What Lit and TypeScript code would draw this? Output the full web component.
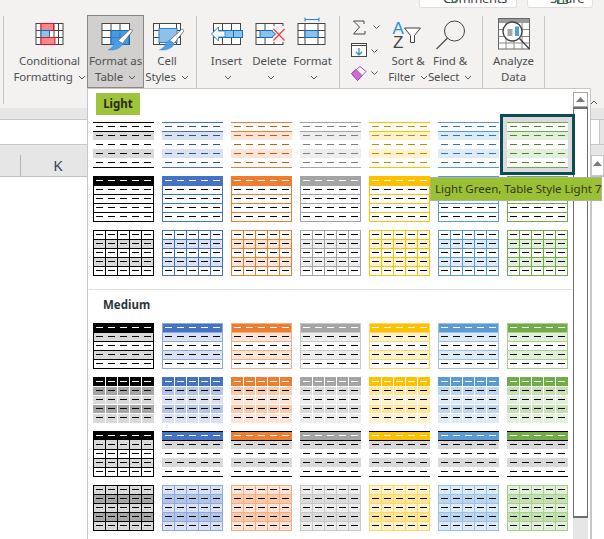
import { LitElement, html, css, svg } from "lit";
import { customElement } from "lit/decorators.js";

const C = ["#000000", "#4472c4", "#ed7d31", "#a5a5a5", "#ffc000", "#5b9bd5", "#70ad47"];
const T80 = ["#d9d9d9", "#d9e1f2", "#fce4d6", "#ededed", "#fff2cc", "#ddebf7", "#e2efda"];
const T60 = ["#a6a6a6", "#b4c6e7", "#f8cbad", "#dbdbdb", "#ffe699", "#bdd7ee", "#c6e0b4"];
const T40 = ["#000000", "#8eaadb", "#f4b083", "#c9c9c9", "#ffd966", "#9cc2e5", "#a8d08d"];
const DK = ["#000000", "#2f5597", "#c55a11", "#7f7f7f", "#bf8f00", "#2e75b6", "#548235"];
const ROWS = [0, 1, 2, 3, 4];

const r = (x: number, y: number, w: number, h: number, f: string) =>
  svg`<rect x=${x} y=${y} width=${w} height=${h} fill=${f}></rect>`;
const dashRow = (row: number, color: string) =>
  ROWS.map((c) => r(3 + 12 * c, 9 * row + 4, 7, 1, color));
const hLines = (ys: number[], color: string) => ys.map((y) => r(0, y, 61, 1, color));
const vLines = (xs: number[], color: string) => xs.map((x) => r(x, 0, 1, 46, color));
const band = (row: number, color: string) => r(0, 9 * row, 61, 9, color);

function shapes(kind: string, c: number) {
  const col = C[c];
  switch (kind) {
    case "l1":
      return [band(1, T80[c]), band(3, T80[c]), hLines([0, 9, 45], col), ROWS.map((i) => dashRow(i, DK[c]))];
    case "l2":
      return [
        r(0, 0, 61, 10, col),
        hLines([18, 27, 36, 45], col),
        vLines([0, 60], col),
        dashRow(0, "#fff"),
        [1, 2, 3, 4].map((i) => dashRow(i, "#000")),
      ];
    case "l3":
      return [
        band(1, T80[c]),
        band(3, T80[c]),
        hLines([0, 9, 18, 27, 36, 45], col),
        vLines([0, 12, 24, 36, 48, 60], col),
        ROWS.map((i) => dashRow(i, "#000")),
      ];
    case "m1":
      return [
        r(0, 0, 61, 10, col),
        band(1, T80[c]),
        band(3, T80[c]),
        hLines([0, 9, 18, 27, 36, 45], T40[c]),
        vLines([0, 60], T40[c]),
        dashRow(0, "#fff"),
        [1, 2, 3, 4].map((i) => dashRow(i, "#000")),
      ];
    case "m2":
      return [
        band(0, col),
        band(1, T60[c]),
        band(2, T80[c]),
        band(3, T60[c]),
        band(4, T80[c]),
        r(0, 45, 61, 1, T80[c]),
        hLines([9, 18, 27, 36], "#fff"),
        vLines([12, 24, 36, 48], "#fff"),
        dashRow(0, "#fff"),
        [1, 2, 3, 4].map((i) => dashRow(i, "#000")),
      ];
    case "m3":
      if (c === 0)
        return [
          r(0, 0, 61, 10, "#000"),
          band(1, T80[0]),
          band(3, T80[0]),
          hLines([18, 27, 36, 45], "#000"),
          vLines([0, 12, 24, 36, 48, 60], "#000"),
          dashRow(0, "#fff"),
          [1, 2, 3, 4].map((i) => dashRow(i, "#000")),
        ];
      return [
        band(0, col),
        band(1, "#d9d9d9"),
        band(3, "#d9d9d9"),
        hLines([0, 9, 45], "#000"),
        dashRow(0, "#fff"),
        [1, 2, 3, 4].map((i) => dashRow(i, "#000")),
      ];
    default:
      return [
        band(0, T80[c]),
        band(1, T60[c]),
        band(2, T80[c]),
        band(3, T60[c]),
        band(4, T80[c]),
        hLines([0, 9, 18, 27, 36, 45], T40[c]),
        vLines([0, 12, 24, 36, 48, 60], T40[c]),
        ROWS.map((i) => dashRow(i, "#000")),
      ];
  }
}

const thumb = (kind: string, c: number, selected = false) => html`
  <div class="thumb ${selected ? "sel" : ""}">
    <svg class="tsvg" width="61" height="46" viewBox="0 0 61 46" shape-rendering="crispEdges">
      ${r(0, 0, 61, 46, "#fff")}${shapes(kind, c)}
    </svg>
  </div>
`;

const GRID = "#444444";
const BLUE = "#8ec1ea";
const DBLUE = "#1170c2";

/* grid drawn in screenshot coordinates */
const gridLines = (x0: number, x1: number, xs: number[]) => svg`
  <rect x=${x0} y="23.5" width=${x1 - x0} height="21" fill="#fff" stroke=${GRID}></rect>
  <path d="M${x0} 30.5H${x1}M${x0} 37.5H${x1}" stroke=${GRID}></path>
  ${xs.map((x) => svg`<path d="M${x} 23.5V44.5" stroke=${GRID}></path>`)}
`;
const brush = (dx: number) => svg`
  <g transform="translate(${dx} 0)">
    <path d="M129.500 29.500 C131 29 132 30 131.500 31.500 L122 43.500 L117.500 40.500 Z" fill="#fff" stroke="#6b6b6b" stroke-width=".9"></path>
    <path d="M117.500 40.500 L122 43.800 C120.500 48.500 114 51 107.500 49.800 C110.500 48.500 112.500 47 113.500 44 C114 42 115.500 40.800 117.500 40.500 Z" fill="#4f9fe0" stroke="#3c8ed6" stroke-width=".5"></path>
  </g>
`;

const icons: Record<string, unknown> = {
  cond: svg`
    ${gridLines(35.5, 62.5, [40.5, 53.5, 58])}
    <rect x="40.5" y="23.5" width="12.5" height="7" fill="#f4868c" stroke="#e8112d"></rect>
    <rect x="40.5" y="30.5" width="8.5" height="7" fill=${BLUE} stroke=${DBLUE}></rect>
    <rect x="40.5" y="37.5" width="14" height="7" fill="#f4868c" stroke="#e8112d"></rect>
  `,
  fat: svg`
    ${gridLines(101.5, 129, [110.5, 119.5])}
    <rect x="110.5" y="30.5" width="18" height="14" fill="#4a98dd" stroke=${DBLUE}></rect>
    <path d="M110.5 37.5H129M119.5 30.5V44.5" stroke="#2a80cc"></path>
    ${brush(0)}
  `,
  cell: svg`
    ${gridLines(153.5, 180.5, [159.5, 176.5])}
    <rect x="159" y="28.5" width="18" height="14" fill=${BLUE} stroke="#2a80cc"></rect>
    ${brush(52)}
  `,
  ins: svg`
    ${gridLines(213.5, 240.5, [222.5, 231.5])}
    <rect x="224" y="30.5" width="18.5" height="7" fill=${BLUE} stroke=${DBLUE}></rect>
    <path d="M233.5 30.5V37.5" stroke=${DBLUE}></path>
    <path d="M211.5 34 L218.5 27 V31 H225 V37 H218.5 V41 Z" fill="#fff" stroke="#2f8fdc"></path>
  `,
  del: svg`
    ${gridLines(255.5, 282.5, [264.5, 273.5])}
    <rect x="272" y="26" width="12.5" height="16" fill="#f3f2f1"></rect>
    <path d="M259.5 30.5H271L275 34L271 37.5H259.5Z" fill=${BLUE} stroke=${DBLUE}></path>
    <path d="M273 29L284 40.5M284 29L273 40.5" stroke="#ee3d4a" stroke-width="1.2" fill="none"></path>
  `,
  fmt: svg`
    ${gridLines(297.5, 324.5, [304.5, 317.5])}
    <rect x="304.5" y="30.5" width="13" height="7" fill=${BLUE} stroke=${DBLUE}></rect>
    <path d="M304.5 17.5V21.5M318.5 17.5V21.5M304.5 19.5H318.5" stroke="#1b87d6" fill="none"></path>
  `,
  sort: svg`
    <text x="393.5" y="33.5" font-family="Liberation Sans, sans-serif" font-size="17" fill="#2f8fdc">A</text>
    <text x="394" y="47.5" font-family="Liberation Sans, sans-serif" font-size="17" fill=${GRID}>Z</text>
    <path d="M405.5 28H421.5L415.5 35.5V42.5H411.5V35.5Z" fill="#fff" stroke=${GRID}></path>
  `,
  find: svg`
    <circle cx="455.5" cy="31" r="10" fill="none" stroke=${GRID}></circle>
    <path d="M448.5 38L437.5 49" stroke=${GRID} stroke-width="1.1"></path>
  `,
  an: svg`
    <rect x="499.5" y="18.5" width="31" height="30.5" fill="#fff" stroke="#666"></rect>
    <rect x="500" y="19" width="30" height="4" fill="#9a9a9a"></rect>
    <path d="M500 29.5H530M500 36.5H530M500 43H530M507 23V49M515 23V49M523 23V49" stroke="#8a8a8a"></path>
    <circle cx="513.5" cy="31.5" r="9.5" fill="#fff" stroke="#444" stroke-width="1.4"></circle>
    <rect x="508.5" y="29" width="5" height="7" fill="#a6a6a6"></rect>
    <rect x="516" y="26.5" width="4" height="9.5" fill="#4b9ee0"></rect>
    <path d="M520.5 38.5L530.5 49" stroke="#444" stroke-width="1.4"></path>
  `,
};

const chev = html`<svg class="chev" width="8" height="5" viewBox="0 0 8 5">
  <path d="M1 1L4 4L7 1" fill="none" stroke="#555" stroke-width="1"></path>
</svg>`;

const tool = (id: string, cx: number, width: number, l1: string, l2: string, hasChev = true, hover = false) => html`
  <div class="tool ${hover ? "hover" : ""}" style="width:${width}px">
    <svg class="ico" width="40" height="36" viewBox="${cx - 20} 16 40 36">${icons[id]}</svg>
    <div class="lbl">${l1}</div>
    <div class="lbl">${l2}${l2 ? " " : ""}${hasChev ? chev : ""}</div>
  </div>
`;

@customElement("app-root")
export class AppRoot extends LitElement {
  static styles = css`
    :host {
      display: block;
      position: relative;
      width: 604px;
      height: 539px;
      overflow: hidden;
      background: #fff;
      font-family: "Noto Sans", "Open Sans", sans-serif;
      color: #444;
    }
    .top {
      height: 8px;
      background: #f3f2f1;
      display: flex;
      justify-content: flex-end;
      gap: 10px;
      padding-right: 11px;
    }
    .tb {
      flex: none;
      height: 8px;
      box-sizing: border-box;
      background: #fff;
      border: 1px solid #e1dfdd;
      border-top: none;
      border-radius: 0 0 3px 3px;
      display: flex;
      align-items: flex-end;
      font-size: 13px;
      line-height: 12px;
      color: #444;
      padding-bottom: 3px;
      white-space: nowrap;
    }
    .tb svg { position: absolute; top: 0; }
    .tb.c { width: 98px; padding-left: 23px; letter-spacing: -0.35px; }
    .tb.s { width: 66px; padding-left: 22px; letter-spacing: -0.1px; }
    .ribbon {
      height: 100px;
      box-sizing: border-box;
      background: #f3f2f1;
      display: flex;
      padding: 8px 0 0 3px;
      position: relative;
    }
    .group {
      height: 88px;
      display: flex;
      border-right: 1px solid #c8c6c4;
      flex: none;
    }
    .g0 { width: 0; }
    .g1 { width: 193px; padding-left: 8px; box-sizing: border-box; }
    .g2 { width: 143px; padding-left: 8px; box-sizing: border-box; }
    .g3 { width: 143px; padding-left: 8px; box-sizing: border-box; }
    .g4 { width: 62px; box-sizing: border-box; }
    .tool {
      flex: none;
      height: 73px;
      box-sizing: border-box;
      margin-top: -1px;
      padding-top: 0;
      border: 1px solid transparent;
      display: flex;
      flex-direction: column;
      align-items: center;
      position: relative;
    }
    .tool.hover { background: #d2d0ce; border-color: #8a8886; }
    .ico { flex: none; overflow: visible; height: 36px; margin-bottom: 1px; }
    .lbl {
      font-size: 11.5px;
      line-height: 16px;
      height: 16px;
      white-space: nowrap;
      letter-spacing: -0.1px;
      color: #505050;
    }
    .chev { margin-left: 2px; vertical-align: 1px; }
    .small {
      width: 39px;
      flex: none;
      display: flex;
      flex-direction: column;
      gap: 7px;
      padding-top: 3px;
      height: 70px;
      box-sizing: border-box;
    }
    .smrow { display: flex; align-items: center; gap: 0; height: 16px; }
    .smrow svg { flex: none; }
    .caret { position: absolute; right: 6px; bottom: 3px; }
    .band1 { height: 12px; box-sizing: border-box; background: #e6e6e6; border-bottom: 1px solid #c8c6c4; }
    .fx { height: 25px; box-sizing: border-box; background: #fff; border-bottom: 1px solid #c6c6c6; display: flex; justify-content: flex-end; }
    .fx .end { width: 4px; background: #e6e6e6; border-left: 1px solid #c8c6c4; }
    .hdr {
      height: 32px;
      box-sizing: border-box;
      background: #e6e6e6;
      border-bottom: 1px solid #c0c0c0;
      display: flex;
      padding-top: 10px;
    }
    .hc1 { width: 20px; flex: none; }
    .hc {
      width: 75px;
      flex: none;
      border-left: 1px solid #b5b5b5;
      box-sizing: border-box;
      text-align: center;
      font-size: 15px;
      line-height: 21px;
      color: #33475c;
    }
    .up {
      margin-left: auto;
      width: 13px;
      box-sizing: border-box;
      background: #fff;
      border: 1px solid #c8c6c4;
      display: flex;
      justify-content: center;
      padding-top: 5px;
    }
    .strip {
      position: absolute;
      right: 0;
      top: 177px;
      bottom: 0;
      width: 14px;
      box-sizing: border-box;
      border-left: 2px solid #c8c6c4;
    }
    .gallery {
      position: absolute;
      left: 87px;
      top: 88px;
      width: 504px;
      height: 451px;
      box-sizing: border-box;
      background: #fff;
      border: 1px solid #c8c6c4;
      border-bottom: none;
      display: flex;
    }
    .content { width: 485px; flex: none; box-sizing: border-box; padding: 4px 0 0 5px; }
    .tag {
      width: 44px;
      height: 22px;
      margin-left: 3px;
      margin-bottom: 7px;
      background: #9ec43c;
      color: #2b2b10;
      font-weight: 700;
      font-size: 11.5px;
      line-height: 22px;
      text-align: center;
    }
    .grid { display: grid; grid-template-columns: repeat(7, 61px); gap: 8px; }
    .thumb { position: relative; z-index: 0; width: 61px; height: 46px; }
    .tsvg { display: block; position: relative; }
    .sel::before {
      content: "";
      position: absolute;
      inset: -8px -7px -7px -7px;
      background: #dcdcdc;
      border: 3px solid #0d4c55;
      z-index: -1;
    }
    .divider { height: 1px; background: #e1e1e1; margin: 13px 1px 0 -4px; }
    .h2 {
      font-weight: 700;
      font-size: 11.5px;
      line-height: 16px;
      margin: 7px 0 10px 10px;
      color: #2b3440;
    }
    .sb { width: 15px; flex: none; display: flex; flex-direction: column; padding-top: 3px; }
    .sbb {
      height: 15px;
      box-sizing: border-box;
      border: 1px solid #a9a9a9;
      background: #fff;
      display: flex;
      align-items: center;
      justify-content: center;
      flex: none;
    }
    .track {
      height: 411px;
      box-sizing: border-box;
      border: 1px solid #6e6e6e;
      border-top-width: 2px;
      border-bottom-width: 2px;
      background: #fff;
      flex: none;
    }
    .rest { flex: 1; background: #e6e6e6; }
    .tip {
      position: absolute;
      left: 430px;
      top: 177px;
      width: 172px;
      height: 24px;
      box-sizing: border-box;
      background: #9ac033;
      border: 1px solid #b0b39a;
      color: #38381a;
      font-size: 11.5px;
      line-height: 22px;
      padding-left: 4px;
      white-space: nowrap;
    }
  `;

  render() {
    const up = html`<svg width="9" height="5" viewBox="0 0 9 5"><path d="M0 5L4.5 0L9 5Z" fill="#7a7a7a"></path></svg>`;
    const row = (kind: string, sel = -1) => C.map((_, c) => thumb(kind, c, c === sel));
    return html`
      <div class="top">
        <div class="tb c">
          <svg width="8" height="3" viewBox="0 0 8 3" style="margin-left:8px"><path d="M0 2.500H3L6 0" fill="none" stroke="#217346"></path></svg>
          Comments
        </div>
        <div class="tb s">
          <svg width="12" height="4" viewBox="0 0 12 4" style="margin-left:7px"><path d="M.5 0V3.500H10.500V0" fill="none" stroke="#217346"></path></svg>
          Share
        </div>
      </div>
      <div class="ribbon">
        <div class="group g0"></div>
        <div class="group g1">
          ${tool("cond", 49.5, 75, "Conditional", "Formatting")}
          ${tool("fat", 115.5, 57, "Format as", "Table", true, true)}
          ${tool("cell", 167, 46, "Cell", "Styles")}
        </div>
        <div class="group g2">
          ${tool("ins", 227, 43, "Insert", "")}
          ${tool("del", 269.5, 43, "Delete", "")}
          ${tool("fmt", 312.5, 43, "Format", "")}
        </div>
        <div class="group g3">
          <div class="small">
            <div class="smrow">
              <svg width="36" height="16" viewBox="349 18 36 16">
                <path d="M365 23V20H354.5L360.5 26L354.5 33H366V30" fill="none" stroke="#444" stroke-width="1"></path>
                <path d="M374.5 24.5L377.5 27.5L380.5 24.5" fill="none" stroke="#555"></path>
              </svg>
            </div>
            <div class="smrow">
              <svg width="36" height="16" viewBox="349 41 36 16">
                <rect x="352.5" y="42.5" width="15" height="13" fill="#fff" stroke="#444"></rect>
                <path d="M352.5 44.5H367.5" stroke="#444"></path>
                <path d="M360 47V54M357 51L360 54L363 51" fill="none" stroke="#1f8ad6" stroke-width="1.2"></path>
                <path d="M372.5 48.5L375.5 51.5L378.5 48.5" fill="none" stroke="#555"></path>
              </svg>
            </div>
            <div class="smrow">
              <svg width="36" height="16" viewBox="349 64 36 16">
                <path d="M352.5 72.5L361 65.5L367 70.5L358.500 79.5Z" fill="#fff" stroke="#b146c2"></path>
                <path d="M352.5 72.5L357 68.500L363 74.500L358.500 79.5Z" fill="#c86fd0" stroke="#b146c2"></path>
                <path d="M372.5 70.5L375.5 73.5L378.5 70.5" fill="none" stroke="#555"></path>
              </svg>
            </div>
          </div>
          ${tool("sort", 409, 42, "Sort &", "Filter")}
          ${tool("find", 451, 42, "Find &", "Select")}
        </div>
        <div class="group g4">${tool("an", 515, 61, "Analyze", "Data", false)}</div>
        <svg class="caret" width="8" height="5" viewBox="0 0 8 5"><path d="M1 4L4 1L7 4" fill="none" stroke="#555"></path></svg>
      </div>
      <div class="band1"></div>
      <div class="fx"><div class="end"></div></div>
      <div class="hdr">
        <div class="hc1"></div>
        <div class="hc">K</div>
        <div class="up">${up}</div>
      </div>
      <div class="strip"></div>

      <div class="gallery">
        <div class="content">
          <div class="tag">Light</div>
          <div class="grid">${row("l1", 6)}${row("l2")}${row("l3")}</div>
          <div class="divider"></div>
          <div class="h2">Medium</div>
          <div class="grid">${row("m1")}${row("m2")}${row("m3")}${row("m4")}</div>
        </div>
        <div class="sb">
          <div class="sbb">${up}</div>
          <div class="track"></div>
          <div class="rest"></div>
        </div>
      </div>
      <div class="tip">Light Green, Table Style Light 7</div>
    `;
  }
}
